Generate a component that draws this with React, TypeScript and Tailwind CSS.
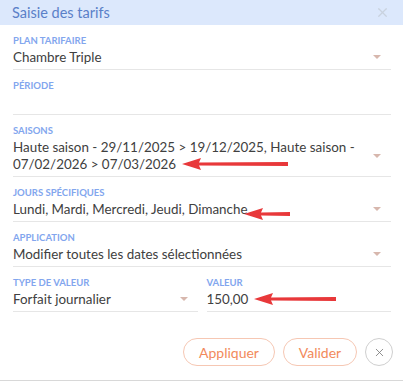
import { X } from "lucide-react";

const font = { fontFamily: "Lato, 'Open Sans', sans-serif" };

function Caret() {
  return (
    <svg width="8" height="5" viewBox="0 0 8 5" className="shrink-0">
      <path d="M0 0 L8 0 L4 4 Z" fill="#d7b7ad" />
    </svg>
  );
}

// red annotation arrow, tip on the left
function Arrow({ width, className }: { width: number; className: string }) {
  return (
    <svg width={width} height="14" viewBox={`0 0 ${width} 14`} className={`absolute ${className}`}>
      <path
        d={`M${width} 5 L17 5.5 L19 1 L0 7 L19 13 L17 8.5 L${width} 9 Z`}
        fill="#e8383a"
      />
    </svg>
  );
}

function Field({
  label,
  children,
  caret = true,
}: {
  label: string;
  children?: React.ReactNode;
  caret?: boolean;
}) {
  return (
    <div className="flex flex-col">
      <div className="text-[9.5px] font-bold uppercase text-[#82a6ee] leading-[12px]">
        {label}
      </div>
      <div className="flex items-center justify-between border-b border-[#e6e6e6] pt-[2px] pb-[3px] min-h-[23px]">
        <div className="text-[13.4px] leading-[17px] text-[#404040]">{children}</div>
        {caret && <div className="mr-[10px]"><Caret /></div>}
      </div>
    </div>
  );
}

export default function App() {
  return (
    <div className="relative w-[403px] h-[382px] bg-white overflow-hidden" style={font}>
      <div className="h-[381px] border-b border-[#d8d8d8] flex flex-col">
        {/* Header */}
        <div className="h-[25px] bg-[#dce8fc] flex items-center justify-between pl-[12px] pr-[13px]">
          <span className="text-[14.5px] text-[#5a80c8]">Saisie des tarifs</span>
          <X size={15} strokeWidth={2} className="text-[#c9d2df]" />
        </div>

        <div className="flex flex-col pl-[13px] pr-[12px] pt-[10px] gap-[10px]">
          <Field label="Plan tarifaire">Chambre Triple</Field>
          <Field label="Période" caret={false}></Field>
          <Field label="Saisons">
            Haute saison - 29/11/2025 &gt; 19/12/2025, Haute saison -
            <br />
            07/02/2026 &gt; 07/03/2026
          </Field>
          <Field label="Jours spécifiques">Lundi, Mardi, Mercredi, Jeudi, Dimanche</Field>
          <Field label="Application">Modifier toutes les dates sélectionnées</Field>
          <div className="grid grid-cols-2 gap-[9px]">
            <Field label="Type de valeur">Forfait journalier</Field>
            <Field label="Valeur" caret={false}>150,00</Field>
          </div>
        </div>

        <div className="flex justify-end items-center gap-[8px] mt-auto mb-[14px] pr-[10px]">
          <button className="h-[28px] w-[92px] rounded-full border border-[#f6c7b3] text-[14px] text-[#f28a5c]">
            Appliquer
          </button>
          <button className="h-[28px] w-[74px] rounded-full border border-[#f6c7b3] text-[14px] text-[#f28a5c]">
            Valider
          </button>
          <button className="h-[28px] w-[28px] rounded-full border border-[#cfcfcf] flex items-center justify-center text-[#777]">
            <X size={13} strokeWidth={1.5} />
          </button>
        </div>
      </div>

      {/* annotations */}
      <Arrow width={106} className="left-[182px] top-[157px]" />
      <Arrow width={46} className="left-[244px] top-[207px]" />
      <Arrow width={82} className="left-[254px] top-[292px]" />
    </div>
  );
}
